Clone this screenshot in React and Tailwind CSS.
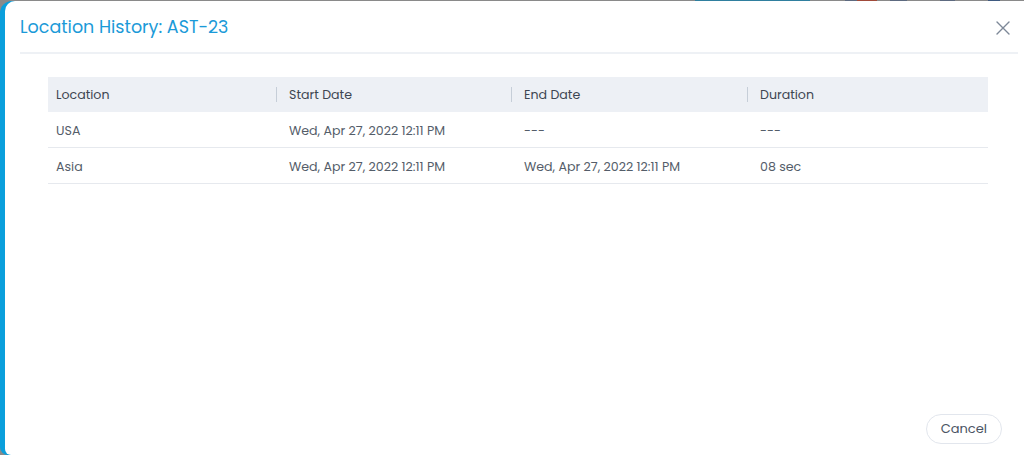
import React from "react";

const font = { fontFamily: "Poppins, Inter, 'Noto Sans', sans-serif" };

const cols = [
  { w: "w-[228px]", pad: "pl-[8px]" },
  { w: "w-[235px]", pad: "pl-[13px]" },
  { w: "w-[236px]", pad: "pl-[13px]" },
  { w: "flex-1", pad: "pl-[13px]" },
];

const rows = [
  ["USA", "Wed, Apr 27, 2022 12:11 PM", "---", "---"],
  ["Asia", "Wed, Apr 27, 2022 12:11 PM", "Wed, Apr 27, 2022 12:11 PM", "08 sec"],
];

export default function App() {
  return (
    <div className="relative w-[1024px] h-[455px] bg-[#8a8a8a] overflow-hidden" style={font}>
      <div className="absolute top-0 left-[695px] w-[115px] h-[2px] bg-[#2f7f9f]" />
      <div className="absolute top-0 left-[845px] w-[12px] h-[2px] bg-[#5d6a80]" />
      <div className="absolute top-0 left-[857px] w-[20px] h-[2px] bg-[#a04a3a]" />
      <div className="absolute top-0 left-[890px] w-[17px] h-[2px] bg-[#5d6a80]" />
      <div className="absolute top-0 left-[940px] w-[15px] h-[2px] bg-[#5d6a80]" />
      <div className="absolute top-0 left-[988px] w-[12px] h-[2px] bg-[#3f5a80]" />
      <div className="absolute top-[1px] left-0 right-0 bottom-0 bg-[#0a9fdc] rounded-tl-[12px] rounded-bl-[8px]">
        <div className="ml-[5px] h-full bg-white rounded-tl-[10px] rounded-bl-[6px] flex flex-col">
          <div className="flex items-center justify-between pl-[15px] pr-[14px] pt-[14px] pb-[13px] mx-0">
            <div className="text-[17.5px] leading-[24px] text-[#1b9ad8] font-normal">
              Location History: AST-23
            </div>
            <svg width="14" height="14" viewBox="0 0 14 14" className="mt-[2px]">
              <path d="M1 1 L13 13 M13 1 L1 13" stroke="#7d8898" strokeWidth="1.4" strokeLinecap="round" />
            </svg>
          </div>
          <div className="ml-[15px] mr-[6px] h-[2px] bg-[#eef1f5]" />
          <div className="mt-[23px] ml-[43px] w-[940px] text-[12.6px]">
            <div className="flex h-[35px] items-center bg-[#edf0f5] text-[#3e4652]">
              {["Location", "Start Date", "End Date", "Duration"].map((h, i) => (
                <div key={h} className={`relative h-full flex items-center pt-[2px] ${cols[i].w} ${cols[i].pad}`}>
                  {i > 0 && <span className="absolute left-0 top-[10px] h-[15px] w-px bg-[#c6ced8]" />}
                  {h}
                </div>
              ))}
            </div>
            {rows.map((r, ri) => (
              <div key={ri} className="flex h-[36px] items-center pt-[3px] border-b border-[#e6e9ee] text-[#545d69]">
                {r.map((c, i) => (
                  <div key={i} className={`${cols[i].w} ${cols[i].pad}`}>{c}</div>
                ))}
              </div>
            ))}
          </div>
          <div className="flex-1" />
          <div className="flex justify-end pr-[22px] pb-[11px]">
            <button className="h-[30px] px-[14px] rounded-full border border-[#e2e6ed] bg-white text-[13px] text-[#4a5463]">
              Cancel
            </button>
          </div>
        </div>
      </div>
    </div>
  );
}
